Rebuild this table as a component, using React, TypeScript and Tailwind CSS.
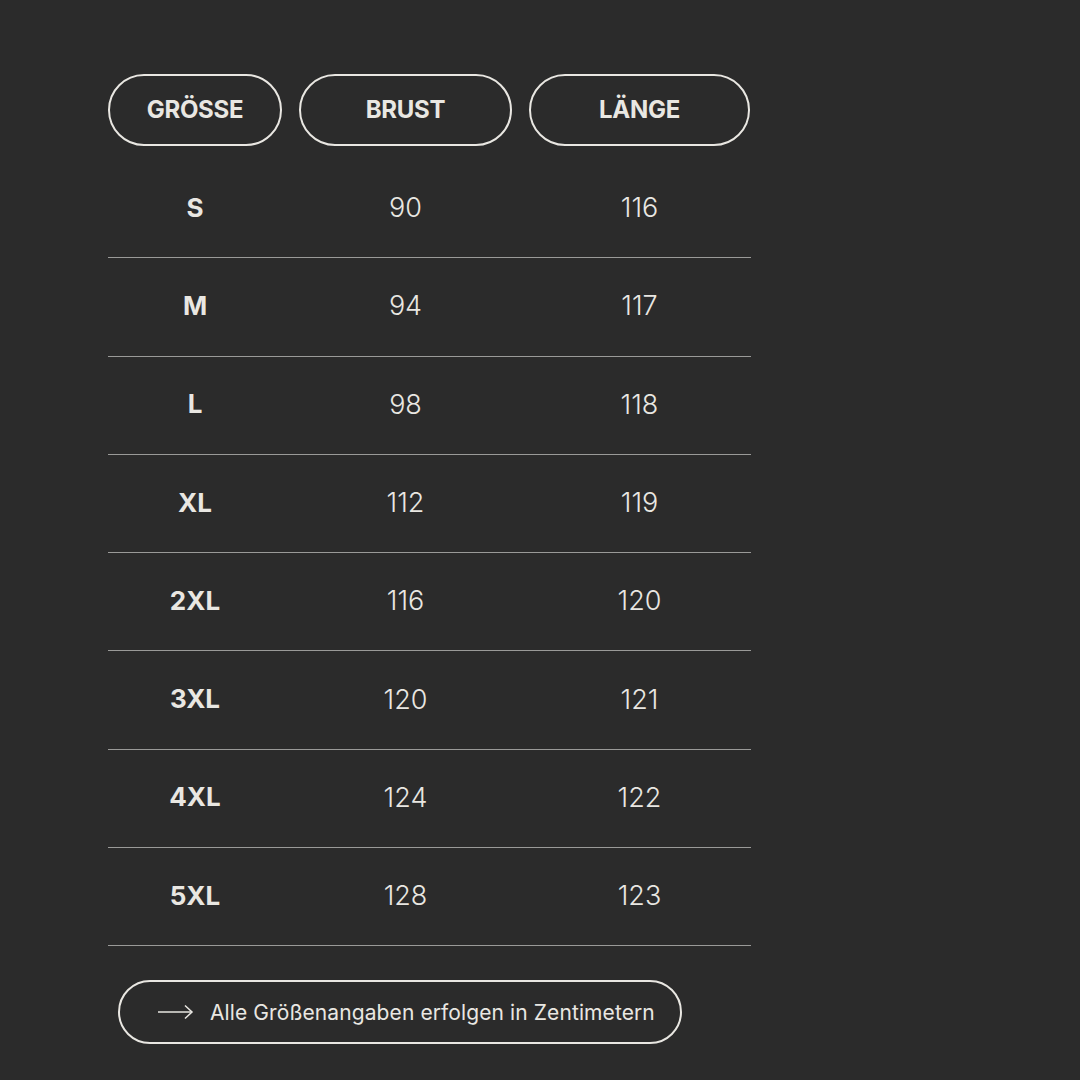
import React from "react";

const rows = [
  ["S", "90", "116"],
  ["M", "94", "117"],
  ["L", "98", "118"],
  ["XL", "112", "119"],
  ["2XL", "116", "120"],
  ["3XL", "120", "121"],
  ["4XL", "124", "122"],
  ["5XL", "128", "123"],
];

const cols = "grid grid-cols-[174px_213px_221px] gap-x-[17px]";

export default function App() {
  return (
    <div
      className="min-h-[1080px] w-[1080px] bg-[#2b2b2b] text-[#e9e7e2] pl-[108px] pt-[74px]"
      style={{ fontFamily: "Inter, 'Noto Sans', sans-serif" }}
    >
      <div className="w-[643px]">
        <div className={cols}>
          {["GRÖSSE", "BRUST", "LÄNGE"].map((h) => (
            <div
              key={h}
              className="h-[72px] rounded-full border-2 border-[#e9e7e2] flex items-center justify-center text-[24px] font-bold tracking-[-0.3px]"
            >
              {h}
            </div>
          ))}
        </div>
        <div className="mt-[14px]">
          {rows.map((r) => (
            <div
              key={r[0]}
              className={`${cols} h-[98.3px] items-center border-b border-[#9a9a98] pb-[2px]`}
            >
              <div className="text-center font-bold text-[26px] leading-[32px]">{r[0]}</div>
              <div className="text-center text-[27px] font-light leading-[32px] pt-[1px]">{r[1]}</div>
              <div className="text-center text-[27px] font-light leading-[32px] pt-[1px]">{r[2]}</div>
            </div>
          ))}
        </div>
        <div className="mt-[34px] ml-[10px] w-[564px] h-[64px] rounded-full border-2 border-[#e9e7e2] flex items-center pl-[38px]">
          <svg width="36" height="16" viewBox="0 0 36 16" fill="none" className="shrink-0">
            <path d="M0 8 H34" stroke="#e9e7e2" strokeWidth="1.5" />
            <path d="M27 1.5 L34 8 L27 14.5" stroke="#e9e7e2" strokeWidth="1.5" />
          </svg>
          <span className="ml-[16px] text-[21px] tracking-[0.1px]">
            Alle Größenangaben erfolgen in Zentimetern
          </span>
        </div>
      </div>
    </div>
  );
}
